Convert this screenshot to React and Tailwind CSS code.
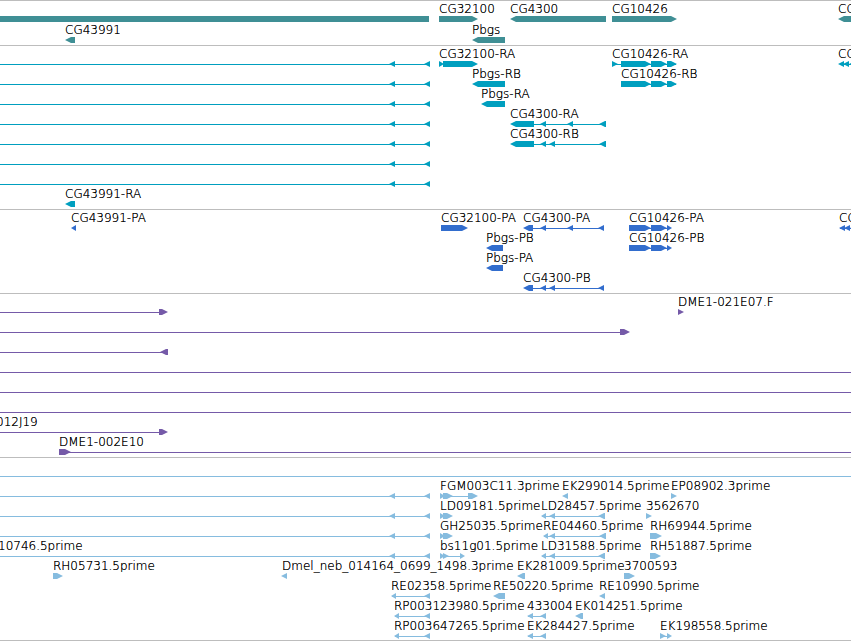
const HEAD = 6;
const END = 'end';

// Each row holds labels [x, text], connector lines [from, to] and
// exons [from, to, direction], all in base units along the sequence.
const longGene = { lines: [[0, 428]], exons: [[389, 395, 'l'], [424, 430, 'l']] };

const row = (labels = [], lines = [], exons = []) => ({ labels, lines, exons });
const rowWithGene = (labels = [], lines = [], exons = []) =>
  row(labels, [...longGene.lines, ...lines], [...longGene.exons, ...exons]);

const tracks = [
  {
    name: 'Genes',
    color: 'fill-[#3f8f95]',
    spacing: 'gap-px pb-0.5',
    rows: [
      row(
        [[439, 'CG32100'], [510, 'CG4300'], [612, 'CG10426'], [838, 'CG']],
        [],
        [[-10, 429, 'n'], [439, 478, 'r'], [510, 606, 'l'], [612, 677, 'r'], [838, 900, 'l']],
      ),
      row([[65, 'CG43991'], [472, 'Pbgs']], [], [[65, 75, 'l'], [472, 505, 'l']]),
    ],
  },
  {
    name: 'Transcripts',
    color: 'fill-[#009fbf]',
    spacing: 'pb-0.5',
    rows: [
      rowWithGene(
        [[439, 'CG32100-RA'], [612, 'CG10426-RA'], [838, 'CG']],
        [[613, 676], [840, 870]],
        [
          [439, 444, 'r'], [443, 478, 'r'], [612, 618, 'r'], [621, 651, 'r'],
          [651, 667, 'r'], [667, 677, 'r'], [838, 844, 'l'], [843, 849, 'l'], [849, 870, 'l'],
        ],
      ),
      rowWithGene(
        [[472, 'Pbgs-RB'], [621, 'CG10426-RB']],
        [[622, 676]],
        [[472, 505, 'l'], [621, 651, 'r'], [651, 667, 'r'], [667, 677, 'r']],
      ),
      rowWithGene([[481, 'Pbgs-RA']], [], [[481, 505, 'l']]),
      rowWithGene(
        [[510, 'CG4300-RA']],
        [[530, 604]],
        [[510, 534, 'l'], [540, 546, 'l'], [567, 573, 'l'], [599, 606, 'l']],
      ),
      rowWithGene(
        [[510, 'CG4300-RB']],
        [[530, 604]],
        [[510, 534, 'l'], [540, 546, 'l'], [549, 555, 'l'], [599, 606, 'l']],
      ),
      rowWithGene(),
      rowWithGene(),
      row([[65, 'CG43991-RA']], [], [[65, 75, 'l']]),
    ],
  },
  {
    name: 'Proteins',
    color: 'fill-[#326dcd]',
    spacing: 'pb-0.5',
    rows: [
      row(
        [[71, 'CG43991-PA'], [441, 'CG32100-PA'], [523, 'CG4300-PA'], [629, 'CG10426-PA'], [839, 'CG']],
        [[530, 602], [630, 670], [840, 870]],
        [
          [71, 76, 'l'], [441, 468, 'r'], [523, 533, 'l'], [540, 546, 'l'], [567, 573, 'l'], [598, 604, 'l'],
          [629, 651, 'r'], [651, 667, 'r'], [667, 672, 'r'], [839, 845, 'l'], [844, 850, 'l'], [850, 870, 'l'],
        ],
      ),
      row(
        [[486, 'Pbgs-PB'], [629, 'CG10426-PB']],
        [[630, 670]],
        [[486, 503, 'l'], [629, 651, 'r'], [651, 667, 'r'], [667, 672, 'r']],
      ),
      row([[486, 'Pbgs-PA']], [], [[486, 503, 'l']]),
      row(
        [[523, 'CG4300-PB']],
        [[530, 602]],
        [[523, 533, 'l'], [540, 546, 'l'], [549, 555, 'l'], [598, 604, 'l']],
      ),
    ],
  },
  {
    name: 'BACs',
    color: 'fill-[#755aa8]',
    spacing: 'pb-0.5',
    rows: [
      row([[678, 'DME1-021E07.F']], [[0, 162]], [[159, 168, 'r'], [678, 684, 'r']]),
      row([], [[0, 624]], [[620, 630, 'r']]),
      row([], [[0, 166]], [[160, 168, 'l']]),
      row([], [[0, END]]),
      row([], [[0, END]]),
      row([], [[0, END]]),
      row([[-4, '012J19']], [[0, 162]], [[159, 168, 'r']]),
      row([[59, 'DME1-002E10']], [[62, END]], [[59, 71, 'r']]),
    ],
  },
  {
    name: 'ESTs',
    color: 'fill-[#86bcdf]',
    spacing: 'pb-px',
    rows: [
      row([], [[0, END]]),
      rowWithGene(
        [[440, 'FGM003C11.3prime'], [562, 'EK299014.5prime'], [671, 'EP08902.3prime']],
        [[441, 474]],
        [[440, 445, 'r'], [443, 453, 'r'], [468, 478, 'r'], [562, 568, 'l'], [671, 677, 'r']],
      ),
      rowWithGene(
        [[440, 'LD09181.5prime'], [541, 'LD28457.5prime'], [646, '3562670']],
        [[542, 602]],
        [[440, 445, 'r'], [443, 453, 'r'], [541, 546, 'l'], [549, 555, 'l'], [598, 605, 'l'], [646, 652, 'r']],
      ),
      rowWithGene(
        [[440, 'GH25035.5prime'], [543, 'RE04460.5prime'], [650, 'RH69944.5prime']],
        [[544, 602]],
        [[440, 445, 'r'], [443, 453, 'r'], [543, 548, 'l'], [549, 555, 'l'], [599, 606, 'l'], [650, 662, 'r']],
      ),
      rowWithGene(
        [[-2, '10746.5prime'], [440, 'bs11g01.5prime'], [541, 'LD31588.5prime'], [650, 'RH51887.5prime']],
        [[441, 462], [542, 602]],
        [
          [440, 445, 'r'], [443, 449, 'r'], [460, 465, 'r'], [541, 546, 'l'],
          [549, 555, 'l'], [598, 605, 'l'], [650, 661, 'r'],
        ],
      ),
      row(
        [
          [53, 'RH05731.5prime'], [282, 'Dmel_neb_014164_0699_1498.3prime'],
          [517, 'EK281009.5prime'], [624, '3700593'],
        ],
        [],
        [[53, 63, 'r'], [281, 287, 'l'], [517, 525, 'l'], [624, 635, 'r']],
      ),
      row(
        [[391, 'RE02358.5prime'], [493, 'RE50220.5prime'], [599, 'RE10990.5prime']],
        [[392, 428]],
        [[391, 396, 'l'], [424, 430, 'l'], [493, 505, 'l'], [599, 605, 'l']],
      ),
      row(
        [[394, 'RP003123980.5prime'], [527, '433004'], [575, 'EK014251.5prime']],
        [[395, 428], [528, 544]],
        [[394, 399, 'l'], [424, 430, 'l'], [527, 533, 'l'], [540, 546, 'l'], [575, 583, 'l']],
      ),
      row(
        [[394, 'RP003647265.5prime'], [527, 'EK284427.5prime'], [660, 'EK198558.5prime']],
        [[395, 428], [528, 544], [661, 670]],
        [[394, 399, 'l'], [424, 430, 'l'], [527, 533, 'l'], [540, 546, 'l'], [660, 666, 'r'], [667, 672, 'r']],
      ),
    ],
  },
];

function exonPoints([from, to, direction]) {
  if (direction === 'r') {
    const neck = Math.max(from, to - HEAD);
    return `${from},0 ${neck},0 ${to},3 ${neck},6 ${from},6`;
  }
  if (direction === 'l') {
    const neck = Math.min(to, from + HEAD);
    return `${to},0 ${neck},0 ${from},3 ${neck},6 ${to},6`;
  }
  return `${from},0 ${to},0 ${to},6 ${from},6`;
}

function FeatureRow({ labels, lines, exons, color }) {
  return (
    <li className="flex flex-col">
      <div className="relative h-3.5">
        {labels.map(([x, text]) => (
          <span key={x} className="absolute top-0 whitespace-nowrap" style={{ left: x }}>
            {text}
          </span>
        ))}
      </div>
      <svg className={`block h-1.5 w-full overflow-visible ${color}`} aria-hidden="true">
        {lines.map(([from, to], i) => (
          <rect key={i} x={from} y="3" width={to === END ? '100%' : to - from} height="1" />
        ))}
        {exons.map((exon, i) => (
          <polygon key={i} points={exonPoints(exon)} />
        ))}
      </svg>
    </li>
  );
}

export default function App() {
  return (
    <main className="w-full overflow-hidden border-b border-[#bdbdbd] bg-white font-['DejaVu_Sans',sans-serif] text-xs leading-3.5 font-extralight text-black [text-shadow:0_0_0_#000]">
      {tracks.map((track) => (
        <section key={track.name} aria-label={track.name} className="border-t border-[#bdbdbd] pt-px">
          <ul className={`flex flex-col ${track.spacing}`}>
            {track.rows.map((r, i) => (
              <FeatureRow key={i} {...r} color={track.color} />
            ))}
          </ul>
        </section>
      ))}
    </main>
  );
}
